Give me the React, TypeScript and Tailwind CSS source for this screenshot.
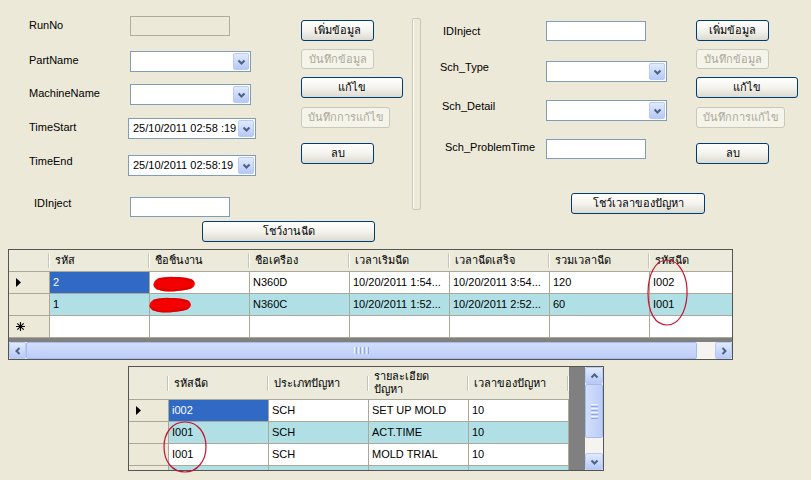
import React from "react";

const FONT = "font-['Liberation_Sans','DejaVu_Sans','Noto_Sans',sans-serif]";

type Dir = "down" | "up" | "left" | "right";

function Chevron({ dir }: { dir: Dir }) {
  const d = {
    down: "M1.5 1.5 L4.5 4.5 L7.5 1.5",
    up: "M1.5 4.5 L4.5 1.5 L7.5 4.5",
    left: "M4.5 1 L1.5 4 L4.5 7",
    right: "M1.5 1 L4.5 4 L1.5 7",
  }[dir];
  const vertical = dir === "down" || dir === "up";
  return (
    <svg
      width={vertical ? 9 : 6}
      height={vertical ? 6 : 8}
      viewBox={vertical ? "0 0 9 6" : "0 0 6 8"}
    >
      <path d={d} fill="none" stroke="#4d6185" strokeWidth="2" />
    </svg>
  );
}

function ArrowBtn({ dir, className }: { dir: Dir; className: string }) {
  return (
    <div
      className={
        "flex shrink-0 items-center justify-center rounded-[2px] border border-[#b9cbf3] bg-gradient-to-b from-[#e1eafe] to-[#b6c9f7] " +
        className
      }
    >
      <Chevron dir={dir} />
    </div>
  );
}

function Btn({
  label,
  className,
  disabled,
}: {
  label: string;
  className: string;
  disabled?: boolean;
}) {
  return (
    <div
      className={
        "flex shrink-0 items-center justify-center rounded-[3px] border whitespace-nowrap " +
        (disabled
          ? "border-[#cac8bb] bg-[#f5f4ea] text-[#aca899] "
          : "border-[#003c74] bg-gradient-to-b from-white via-[#f4f3ee] to-[#dcdad0] text-black ") +
        className
      }
    >
      {label}
    </div>
  );
}

function TextBox({ disabled }: { disabled?: boolean }) {
  return (
    <div
      className={
        "h-[20px] w-[100px] shrink-0 border " +
        (disabled ? "border-[#afaca0] bg-[#ece9d8]" : "border-[#7f9db9] bg-white")
      }
    />
  );
}

function Combo({ text, className }: { text?: string; className: string }) {
  return (
    <div className={"flex h-[21px] shrink-0 border border-[#7f9db9] bg-white p-px " + className}>
      <div className="flex-1 overflow-hidden whitespace-nowrap pl-[3px] leading-[17px]">{text}</div>
      <ArrowBtn dir="down" className="h-full w-[16px]" />
    </div>
  );
}

function Field({
  label,
  lp,
  w,
  className,
  children,
}: {
  label: string;
  lp: string;
  w: string;
  className?: string;
  children: React.ReactNode;
}) {
  return (
    <div className={"flex items-start " + (className ?? "")}>
      <div className={"shrink-0 whitespace-nowrap " + w + " " + lp}>{label}</div>
      {children}
    </div>
  );
}

function ButtonColumn() {
  return (
    <div className="flex flex-col items-start pt-[20px]">
      <Btn label="เพิ่มข้อมูล" className="h-[21px] w-[73px]" />
      <Btn label="บันทึกข้อมูล" disabled className="mt-[8px] h-[20px] w-[73px]" />
      <Btn label="แก้ไข" className="mt-[8px] h-[21px] w-[102px]" />
      <Btn label="บันทึกการแก้ไข" disabled className="mt-[9px] h-[21px] w-[89px]" />
      <Btn label="ลบ" className="mt-[15px] h-[21px] w-[73px]" />
    </div>
  );
}

function HeaderCell({ label, className }: { label: React.ReactNode; className: string }) {
  return (
    <div className={"flex h-full shrink-0 items-center " + className}>
      <div className="flex-1 overflow-hidden whitespace-nowrap pl-[5px]">{label}</div>
      <div className="h-[15px] w-px bg-[#c7c5b2]" />
      <div className="h-[15px] w-px bg-white" />
    </div>
  );
}

function Cell({
  children,
  className,
}: {
  children?: React.ReactNode;
  className: string;
}) {
  return (
    <div
      className={
        "relative flex h-full shrink-0 items-center overflow-visible whitespace-nowrap border-r border-[#aca899] pl-[3px] " +
        className
      }
    >
      {children}
    </div>
  );
}

function RowHead({ mark, className }: { mark?: "cur" | "new"; className: string }) {
  return (
    <div
      className={
        "flex h-full shrink-0 items-center border-r border-[#aca899] bg-[#ece9d8] pl-[7px] " + className
      }
    >
      {mark === "cur" && (
        <svg width="5" height="9" viewBox="0 0 5 9">
          <path d="M0 0 L5 4.5 L0 9 Z" fill="#000" />
        </svg>
      )}
      {mark === "new" && (
        <svg width="9" height="9" viewBox="0 0 9 9">
          <path
            d="M4.5 0 V9 M0 4.5 H9 M1.3 1.3 L7.7 7.7 M7.7 1.3 L1.3 7.7"
            stroke="#000"
            strokeWidth="1.1"
          />
        </svg>
      )}
    </div>
  );
}

function Scribble({ className }: { className: string }) {
  return (
    <svg className={"absolute " + className} width="46" height="18" viewBox="0 0 46 18">
      <path
        d="M3 8 C4 3 12 2 18 4 C24 1 33 2 40 4 C45 6 45 11 41 13 C36 16 28 15 22 16 C15 17 8 16 4 13 C2 11 2 9 3 8 Z"
        fill="#f40000"
      />
      <path d="M6 5 C14 2 30 2 42 6 M5 13 C16 17 30 16 41 12" stroke="#e00000" strokeWidth="2" fill="none" />
    </svg>
  );
}

const CELL = "w-[100px]";

function Grid1() {
  const rows = [
    { id: "2", name: "", mc: "N360D", s: "10/20/2011 1:54...", e: "10/20/2011 3:54...", t: "120", c: "I002" },
    { id: "1", name: "", mc: "N360C", s: "10/20/2011 1:52...", e: "10/20/2011 2:52...", t: "60", c: "I001" },
  ];
  return (
    <div className="ml-[8px] mt-[7px] flex h-[111px] w-[725px] flex-col overflow-hidden border border-[#555555]">
      <div className="flex h-[22px] shrink-0 border-b border-[#aca899] bg-[#ebeadb]">
        <HeaderCell label="" className="w-[41px]" />
        <HeaderCell label="รหัส" className={CELL} />
        <HeaderCell label="ชื่อชิ้นงาน" className={CELL} />
        <HeaderCell label="ชื่อเครื่อง" className={CELL} />
        <HeaderCell label="เวลาเริ่มฉีด" className={CELL} />
        <HeaderCell label="เวลาฉีดเสร็จ" className={CELL} />
        <HeaderCell label="รวมเวลาฉีด" className={CELL} />
        <HeaderCell label="รหัสฉีด" className="w-[100px]" />
      </div>
      {rows.map((r, i) => (
        <div
          key={r.id}
          className={"flex h-[22px] shrink-0 border-b border-[#aca899] " + (i === 1 ? "bg-[#b0e0e6]" : "bg-white")}
        >
          <RowHead mark={i === 0 ? "cur" : undefined} className="w-[41px]" />
          <Cell className={CELL + (i === 0 ? " bg-[#316ac5] text-white" : "")}>{r.id}</Cell>
          <Cell className={CELL}>
            {i === 0 ? (
              <Scribble className="left-[1px] top-[3px]" />
            ) : (
              <Scribble className="left-[-3px] top-[2px]" />
            )}
          </Cell>
          <Cell className={CELL}>{r.mc}</Cell>
          <Cell className={CELL}>{r.s}</Cell>
          <Cell className={CELL}>{r.e}</Cell>
          <Cell className={CELL}>{r.t}</Cell>
          <Cell className="w-[100px]">{r.c}</Cell>
        </div>
      ))}
      <div className="flex h-[22px] shrink-0 border-b border-[#aca899] bg-white">
        <RowHead mark="new" className="w-[41px]" />
        <Cell className={CELL} />
        <Cell className={CELL} />
        <Cell className={CELL} />
        <Cell className={CELL} />
        <Cell className={CELL} />
        <Cell className={CELL} />
        <Cell className="w-[100px]" />
      </div>
      <div className="flex-1 bg-[#808080]" />
      <div className="flex h-[17px] shrink-0 bg-[#f5f4ef]">
        <ArrowBtn dir="left" className="h-full w-[17px]" />
        <div className="flex h-full w-[671px] shrink-0 items-center justify-center rounded-[2px] border border-[#a3bbee] bg-gradient-to-b from-[#d3defc] to-[#bccdf8]">
          <div className="flex h-[7px] gap-[1px]">
            <div className="w-px bg-[#eef3fe]" />
            <div className="w-px bg-[#8ca7e3]" />
            <div className="w-px bg-[#eef3fe]" />
            <div className="w-px bg-[#8ca7e3]" />
            <div className="w-px bg-[#eef3fe]" />
            <div className="w-px bg-[#8ca7e3]" />
            <div className="w-px bg-[#eef3fe]" />
            <div className="w-px bg-[#8ca7e3]" />
          </div>
        </div>
        <div className="flex-1" />
        <ArrowBtn dir="right" className="h-full w-[17px]" />
      </div>
    </div>
  );
}

function Grid2() {
  const rows = [
    { c: "i002", t: "SCH", d: "SET UP MOLD", v: "10" },
    { c: "I001", t: "SCH", d: "ACT.TIME", v: "10" },
    { c: "I001", t: "SCH", d: "MOLD TRIAL", v: "10" },
  ];
  return (
    <div className="ml-[128px] mt-[6px] flex h-[105px] w-[476px] overflow-hidden border border-[#555555]">
      <div className="flex w-[440px] shrink-0 flex-col overflow-hidden">
        <div className="flex h-[33px] shrink-0 border-b border-[#aca899] bg-[#ebeadb]">
          <HeaderCell label="" className="w-[40px]" />
          <HeaderCell label="รหัสฉีด" className={CELL} />
          <HeaderCell label="ประเภทปัญหา" className={CELL} />
          <HeaderCell
            label={
              <span className="block whitespace-normal">
                รายละเอียด
                <br />
                ปัญหา
              </span>
            }
            className={CELL}
          />
          <HeaderCell label="เวลาของปัญหา" className={CELL} />
        </div>
        {rows.map((r, i) => (
          <div
            key={i}
            className={"flex h-[22px] shrink-0 border-b border-[#aca899] " + (i === 1 ? "bg-[#b0e0e6]" : "bg-white")}
          >
            <RowHead mark={i === 0 ? "cur" : undefined} className="w-[40px]" />
            <Cell className={CELL + (i === 0 ? " bg-[#316ac5] text-white" : "")}>{r.c}</Cell>
            <Cell className={CELL}>{r.t}</Cell>
            <Cell className={CELL}>{r.d}</Cell>
            <Cell className={CELL}>{r.v}</Cell>
          </div>
        ))}
        <div className="flex h-[22px] shrink-0 bg-[#b0e0e6]">
          <RowHead className="w-[40px]" />
          <Cell className={CELL} />
          <Cell className={CELL} />
          <Cell className={CELL} />
          <Cell className={CELL} />
        </div>
      </div>
      <div className="w-[16px] shrink-0 bg-[#808080]" />
      <div className="flex w-[18px] shrink-0 flex-col bg-[#f5f4ef]">
        <ArrowBtn dir="up" className="h-[17px] w-full" />
        <div className="flex h-[54px] w-full shrink-0 items-center justify-center rounded-[2px] border border-[#a3bbee] bg-gradient-to-r from-[#d3defc] to-[#bccdf8]">
          <div className="flex w-[7px] flex-col gap-[1px]">
            <div className="h-px bg-[#eef3fe]" />
            <div className="h-px bg-[#8ca7e3]" />
            <div className="h-px bg-[#eef3fe]" />
            <div className="h-px bg-[#8ca7e3]" />
            <div className="h-px bg-[#eef3fe]" />
            <div className="h-px bg-[#8ca7e3]" />
            <div className="h-px bg-[#eef3fe]" />
            <div className="h-px bg-[#8ca7e3]" />
          </div>
        </div>
        <div className="flex-1" />
        <ArrowBtn dir="down" className="h-[17px] w-full" />
      </div>
    </div>
  );
}

export default function App() {
  return (
    <div className={"relative h-[480px] w-[811px] overflow-hidden bg-[#ece9d8] text-[11px] leading-[13px] text-black " + FONT}>
      <div className="flex items-start">
        {/* left form */}
        <div className="flex w-[412px] shrink-0 flex-col">
          <div className="flex items-start">
            <div className="flex w-[301px] shrink-0 flex-col pl-[29px] pt-[16px]">
              <Field label="RunNo" w="w-[101px]" lp="pt-[3px]">
                <TextBox disabled />
              </Field>
              <Field label="PartName" w="w-[101px]" lp="pt-[3px]" className="mt-[15px]">
                <Combo className="w-[121px]" />
              </Field>
              <Field label="MachineName" w="w-[101px]" lp="pt-[3px]" className="mt-[12px]">
                <Combo className="w-[121px]" />
              </Field>
              <Field label="TimeStart" w="w-[99px]" lp="pt-[3px]" className="mt-[13px]">
                <Combo text="25/10/2011 02:58 :19" className="w-[128px]" />
              </Field>
              <Field label="TimeEnd" w="w-[99px]" lp="pt-0" className="mt-[16px]">
                <Combo text="25/10/2011 02:58:19" className="w-[128px]" />
              </Field>
              <Field label="IDInject" w="w-[101px]" lp="pl-[5px]" className="mt-[21px]">
                <TextBox />
              </Field>
            </div>
            <ButtonColumn />
          </div>
          <Btn label="โชว์งานฉีด" className="ml-[202px] mt-[4px] h-[21px] w-[173px]" />
        </div>

        {/* separator */}
        <div className="mt-[18px] h-[192px] w-[9px] shrink-0 rounded-[2px] border border-[#c9c6b4] shadow-[inset_1px_0_0_#ffffff]" />

        {/* right form */}
        <div className="flex flex-1 flex-col">
          <div className="flex items-start">
            <div className="flex w-[275px] shrink-0 flex-col pl-[19px] pt-[21px]">
              <Field label="IDInject" w="w-[106px]" lp="pl-[3px] pt-[4px]">
                <TextBox />
              </Field>
              <Field label="Sch_Type" w="w-[106px]" lp="pt-0" className="mt-[20px]">
                <Combo className="w-[121px]" />
              </Field>
              <Field label="Sch_Detail" w="w-[106px]" lp="pl-[2px]" className="mt-[18px]">
                <Combo className="w-[121px]" />
              </Field>
              <Field label="Sch_ProblemTime" w="w-[106px]" lp="pl-[5px] pt-[2px]" className="mt-[18px]">
                <TextBox />
              </Field>
            </div>
            <ButtonColumn />
          </div>
          <Btn label="โชว์เวลาของปัญหา" className="ml-[150px] mt-[29px] h-[21px] w-[134px]" />
        </div>
      </div>

      <Grid1 />
      <Grid2 />

      {/* hand-drawn marks over the grids */}
      <svg className="absolute left-[644px] top-[257px]" width="48" height="72" viewBox="0 0 48 72">
        <path
          d="M23 3 C36 3 44 20 43 38 C42 56 34 68 23 68 C11 68 4 55 4 36 C4 18 11 3 23 3 Z"
          fill="none"
          stroke="#c8102e"
          strokeWidth="1.2"
        />
      </svg>
      <svg className="absolute left-[160px] top-[419px]" width="50" height="56" viewBox="0 0 50 56">
        <path
          d="M25 3 C38 3 46 14 46 28 C46 42 37 53 25 53 C12 53 4 42 4 28 C4 14 12 3 25 3 Z"
          fill="none"
          stroke="#c8102e"
          strokeWidth="1.2"
        />
      </svg>
    </div>
  );
}
